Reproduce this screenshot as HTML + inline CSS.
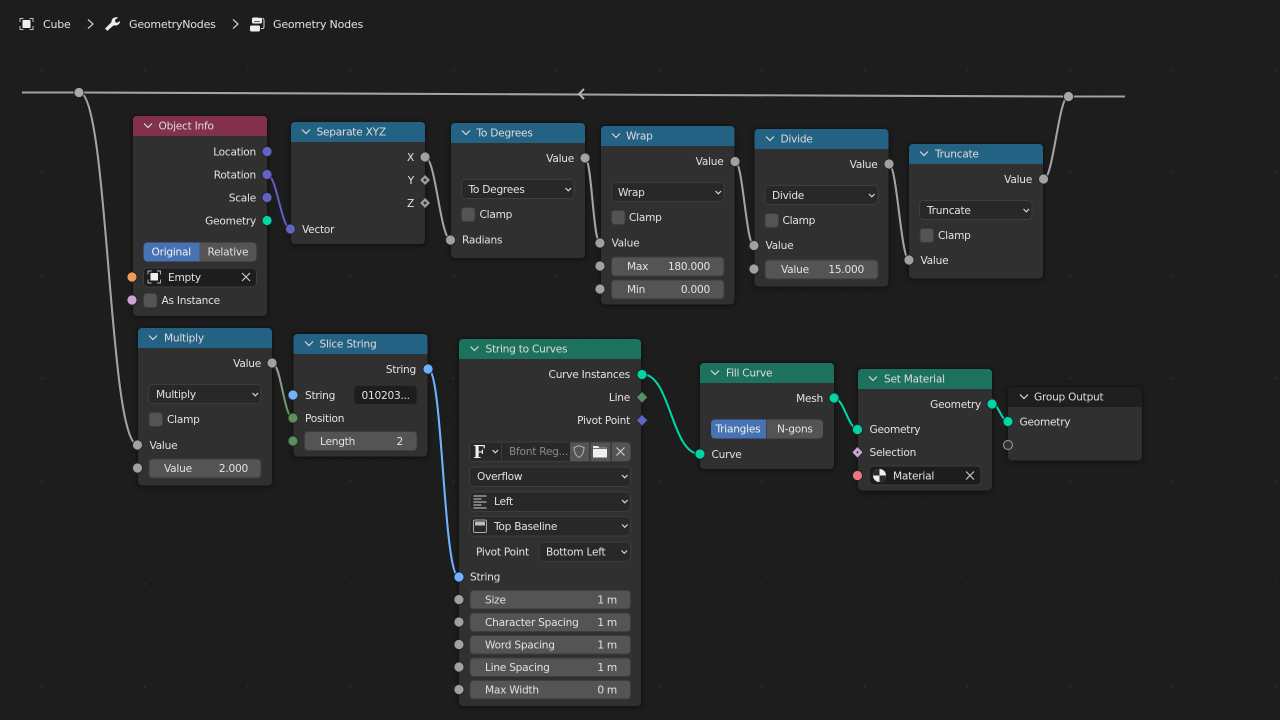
<!DOCTYPE html>
<html><head><meta charset="utf-8"><title>Geometry Nodes</title>
<style>
html,body{margin:0;padding:0;background:#1d1d1d;width:1280px;height:720px;overflow:hidden}
svg{display:block;position:absolute;left:0;top:0;filter:blur(.3px)}
text{font-family:"DejaVu Sans","Liberation Sans",sans-serif;font-size:10.6px;letter-spacing:-.25px;fill:#e2e2e2}
.b{font-size:11px;letter-spacing:-.2px}
.r{text-anchor:end}
.h{fill:#dcdcdc}
.d{fill:#8a8a8a}
.n{fill:#303030;filter:drop-shadow(0 0 1px #111) drop-shadow(0 1px 3px rgba(0,0,0,.45))}
.f{fill:#545454;stroke:#3d3d3d}
.s{fill:#282828;stroke:#3d3d3d}
.c{fill:#545454;stroke:#3d3d3d}
.ch{fill:none;stroke:#d8d8d8;stroke-width:1.2}
.o{fill:none;stroke:#1a1a1a;stroke-width:3.4}
.w{fill:none;stroke-width:2.1}
.g{stroke:#a3a3a3}
.k{fill:#a1a1a1;stroke:#222;stroke-width:.8}
.x{fill:none;stroke:#cfcfcf;stroke-width:1.1}
.sk circle{r:5px}
</style></head><body>
<svg width="1280" height="720" viewBox="0 0 1280 720" xmlns="http://www.w3.org/2000/svg">
<defs>
<pattern id="p1" x="1.2" y="8" width="20.56" height="20.56" patternUnits="userSpaceOnUse"><rect x="0" y="0" width="1.2" height="1.2" fill="#282828"/></pattern>
<pattern id="p2" x="41.2" y="69" width="102.8" height="102.8" patternUnits="userSpaceOnUse"><rect x="0" y="0" width="1.6" height="1.6" fill="#2e2e2e"/></pattern>
<linearGradient id="gp" gradientUnits="userSpaceOnUse" x1="272" y1="363" x2="293" y2="418"><stop offset="0" stop-color="#a1a1a1"/><stop offset="1" stop-color="#5b8f5b"/></linearGradient>
</defs>
<rect width="1280" height="720" fill="#1d1d1d"/>
<rect width="1280" height="720" fill="url(#p1)"/>
<rect width="1280" height="720" fill="url(#p2)"/>

<!-- breadcrumb -->
<path d="M20 22v-3.500h3.500M29.500 18.500h3.500v3.500M33 26v3.500h-3.500M23.500 29.500H20v-3.500" fill="none" stroke="#bdbdbd" stroke-width="1"/>
<rect x="22.500" y="20" width="8" height="8" fill="#f0f0f0" rx=".8"/>
<text class="b" x="43" y="28">Cube</text>
<path d="M88 19.500l5 4.500-5 4.500" fill="none" stroke="#cfcfcf" stroke-width="1.2"/>
<path d="M105.500 28.500l1.800 2 6.200-5.500c2.500.8 5.800-.2 6.300-3.500l-2.700 1.700-2.300-1.200.2-2.600 2.500-1.700c-3.200-.8-6 1.200-5.700 4.500z" fill="#f0f0f0" stroke="#f0f0f0" stroke-width=".6"/>
<text class="b" x="129" y="28">GeometryNodes</text>
<path d="M233 19.500l5 4.500-5 4.500" fill="none" stroke="#cfcfcf" stroke-width="1.200"/>
<rect x="252" y="17.500" width="10" height="6" rx="1.500" fill="#eee"/>
<rect x="250" y="25.500" width="10" height="6" rx="1.500" fill="#eee"/>
<path d="M258 17.500h3M254 21.500h6" stroke="#333" stroke-width=".8" fill="none"/>
<path d="M261 28.500h1.500c1.500 0 1.500-1 1.500-2v-6c0-1-.5-2-1.500-2" fill="none" stroke="#ddd" stroke-width="1"/>
<text class="b" x="273" y="28">Geometry Nodes</text>

<!-- reroute lines -->
<path class="o" d="M22 92.500H79L1068 96.500H1125"/>
<path class="w g" d="M22 92.500H79L1068 96.500H1125"/>
<path d="M584 89l-5 5 5 5" fill="none" stroke="#b5b5b5" stroke-width="2"/>
<path class="o" d="M79 92C109 92 108 445 138 445"/>
<path class="w g" d="M79 92C109 92 108 445 138 445"/>

<!-- Object Info -->
<rect class="n" x="133" y="116" width="134" height="200" rx="4"/>
<path d="M133 136V120a4 4 0 0 1 4-4h126a4 4 0 0 1 4 4v16z" fill="#83314a"/>
<path class="ch" d="M144 123.500l4 4 4-4"/>
<text class="h" x="158.500" y="129.500">Object Info</text>
<text class="r" x="256" y="155.500">Location</text>
<text class="r" x="256" y="178.500">Rotation</text>
<text class="r" x="256" y="201.500">Scale</text>
<text class="r" x="256" y="224.500">Geometry</text>
<path d="M147.500 242.500h52v19h-52a4 4 0 0 1-4-4v-11a4 4 0 0 1 4-4z" fill="#4772b3"/>
<path d="M199.500 242.500h53a4 4 0 0 1 4 4v11a4 4 0 0 1-4 4h-53z" fill="#545454"/>
<text x="151.500" y="255.500" style="fill:#f2f2f2">Original</text>
<text x="207.500" y="255.500">Relative</text>
<rect class="s" x="143.500" y="268" width="113" height="19" rx="4" style="fill:#1d1d1d"/>
<path d="M148 274.500v-3.500h3.500M157 271h3.500v3.500M160.500 279.500v3.500h-3.500M151.500 283H148v-3.500" fill="none" stroke="#bdbdbd" stroke-width=".9"/>
<rect x="150.500" y="273" width="7.500" height="7.500" fill="#f0f0f0"/>
<text x="168" y="281">Empty</text>
<path class="x" d="M242 273l8 8M250 273l-8 8"/>
<rect class="c" x="143.500" y="293.500" width="13.500" height="14" rx="3"/>
<text x="161.500" y="304">As Instance</text>

<!-- Separate XYZ -->
<rect class="n" x="291" y="122" width="134" height="122" rx="4"/>
<path d="M291 142V126a4 4 0 0 1 4-4h126a4 4 0 0 1 4 4v16z" fill="#246283"/>
<path class="ch" d="M302 129.500l4 4 4-4"/>
<text class="h" x="316.500" y="135.500">Separate XYZ</text>
<text class="r" x="414" y="161">X</text>
<text class="r" x="414" y="184">Y</text>
<text class="r" x="414" y="207">Z</text>
<text x="302" y="233">Vector</text>

<!-- To Degrees -->
<rect class="n" x="451" y="123" width="134" height="135" rx="4"/>
<path d="M451 143V127a4 4 0 0 1 4-4h126a4 4 0 0 1 4 4v16z" fill="#246283"/>
<path class="ch" d="M462 130.500l4 4 4-4"/>
<text class="h" x="476.500" y="136.500">To Degrees</text>
<text class="r" x="574" y="162">Value</text>
<rect class="s" x="461.500" y="179.500" width="112.500" height="19" rx="4"/>
<text x="468.500" y="193">To Degrees</text>
<path class="ch" d="M565.500 188l2.800 2.800 2.800-2.800"/>
<rect class="c" x="461.500" y="207.500" width="13.500" height="14" rx="3"/>
<text x="479.500" y="218">Clamp</text>
<text x="462" y="243.500">Radians</text>

<!-- Wrap -->
<rect class="n" x="601" y="126" width="133.500" height="178.500" rx="4"/>
<path d="M601 146V130a4 4 0 0 1 4-4h125.500a4 4 0 0 1 4 4v16z" fill="#246283"/>
<path class="ch" d="M612 133.500l4 4 4-4"/>
<text class="h" x="626" y="139.500">Wrap</text>
<text class="r" x="723.500" y="165">Value</text>
<rect class="s" x="611.500" y="182.500" width="112.500" height="19" rx="4"/>
<text x="618" y="196">Wrap</text>
<path class="ch" d="M715.500 191l2.800 2.800 2.800-2.800"/>
<rect class="c" x="611.500" y="210.500" width="13.500" height="14" rx="3"/>
<text x="629" y="221">Clamp</text>
<text x="611.500" y="246.500">Value</text>
<rect class="f" x="611.500" y="257" width="112.500" height="19" rx="3.500"/>
<text x="627" y="270">Max</text><text class="r" x="710" y="270">180.000</text>
<rect class="f" x="611.500" y="280" width="112.500" height="19" rx="3.500"/>
<text x="627" y="293">Min</text><text class="r" x="710" y="293">0.000</text>

<!-- Divide -->
<rect class="n" x="754.500" y="129" width="134" height="157.500" rx="4"/>
<path d="M754.500 149V133a4 4 0 0 1 4-4h126a4 4 0 0 1 4 4v16z" fill="#246283"/>
<path class="ch" d="M766 136.500l4 4 4-4"/>
<text class="h" x="780.500" y="142.500">Divide</text>
<text class="r" x="877.500" y="168">Value</text>
<rect class="s" x="765" y="185.500" width="113" height="19" rx="4"/>
<text x="772" y="199">Divide</text>
<path class="ch" d="M869 194l2.800 2.800 2.800-2.800"/>
<rect class="c" x="765" y="213.500" width="13.500" height="14" rx="3"/>
<text x="782.500" y="224">Clamp</text>
<text x="765.500" y="249">Value</text>
<rect class="f" x="765" y="260" width="113" height="19" rx="3.500"/>
<text x="781" y="273">Value</text><text class="r" x="864" y="273">15.000</text>

<!-- Truncate -->
<rect class="n" x="909" y="144" width="134" height="134.500" rx="4"/>
<path d="M909 164V148a4 4 0 0 1 4-4h126a4 4 0 0 1 4 4v16z" fill="#246283"/>
<path class="ch" d="M920 151.500l4 4 4-4"/>
<text class="h" x="935" y="157.500">Truncate</text>
<text class="r" x="1032" y="183">Value</text>
<rect class="s" x="919.500" y="200.500" width="112.500" height="19" rx="4"/>
<text x="927" y="214">Truncate</text>
<path class="ch" d="M1023.500 209l2.800 2.800 2.800-2.800"/>
<rect class="c" x="920" y="228.500" width="13.500" height="14" rx="3"/>
<text x="938" y="239">Clamp</text>
<text x="920.500" y="264">Value</text>

<!-- Multiply -->
<rect class="n" x="138" y="328" width="134" height="157.500" rx="4"/>
<path d="M138 348V332a4 4 0 0 1 4-4h126a4 4 0 0 1 4 4v16z" fill="#246283"/>
<path class="ch" d="M149 335.500l4 4 4-4"/>
<text class="h" x="164" y="341.500">Multiply</text>
<text class="r" x="261" y="367">Value</text>
<rect class="s" x="148.500" y="384.500" width="112.500" height="19" rx="4"/>
<text x="156" y="398">Multiply</text>
<path class="ch" d="M252.500 393l2.800 2.800 2.800-2.800"/>
<rect class="c" x="149" y="412.500" width="13.500" height="14" rx="3"/>
<text x="167" y="423">Clamp</text>
<text x="149.500" y="449">Value</text>
<rect class="f" x="149" y="459" width="112" height="19" rx="3.500"/>
<text x="164" y="472">Value</text><text class="r" x="248" y="472">2.000</text>

<!-- Slice String -->
<rect class="n" x="293.500" y="334" width="134" height="122.500" rx="4"/>
<path d="M293.500 354V338a4 4 0 0 1 4-4h126a4 4 0 0 1 4 4v16z" fill="#246283"/>
<path class="ch" d="M305 341.500l4 4 4-4"/>
<text class="h" x="319.500" y="347.500">Slice String</text>
<text class="r" x="416" y="373">String</text>
<text x="305" y="399">String</text>
<rect class="s" x="354" y="385.500" width="63" height="19" rx="4" style="fill:#1d1d1d;stroke:#2c2c2c"/>
<text x="361.500" y="399">010203...</text>
<text x="305" y="422">Position</text>
<rect class="f" x="304.500" y="431.500" width="112.500" height="19" rx="3.500"/>
<text x="320" y="445">Length</text><text class="r" x="403" y="445">2</text>

<!-- String to Curves -->
<rect class="n" x="459" y="339" width="182" height="367" rx="4"/>
<path d="M459 359V343a4 4 0 0 1 4-4h174a4 4 0 0 1 4 4v16z" fill="#1d725e"/>
<path class="ch" d="M470.500 346.500l4 4 4-4"/>
<text class="h" x="485.500" y="352.500">String to Curves</text>
<text class="r" x="630" y="378">Curve Instances</text>
<text class="r" x="630" y="401">Line</text>
<text class="r" x="630" y="424">Pivot Point</text>
<rect x="469.500" y="442" width="161" height="19.500" rx="4" fill="#282828" stroke="#3d3d3d"/>
<path d="M501.500 442.500v19" stroke="#3d3d3d"/>
<text x="473.500" y="458" style="font-family:'Liberation Serif','DejaVu Serif',serif;font-size:20px;font-weight:bold;letter-spacing:0;fill:#f0f0f0">F</text>
<path class="ch" d="M492.500 450l2.800 2.800 2.800-2.800"/>
<text class="d" x="509" y="455">Bfont Reg...</text>
<rect x="570" y="442.500" width="19.500" height="18.500" fill="#545454"/>
<path d="M574 447.500l5-1.800 5 1.800c0 5-1.500 8-5 10-3.500-2-5-5-5-10z" fill="none" stroke="#b5b5b5" stroke-width="1"/>
<rect x="590.500" y="442.500" width="20" height="18.500" fill="#545454"/>
<path d="M593 446h5l1.500 1.700h7.500v9.800h-14z" fill="#eee"/>
<path d="M593 448.500h14" stroke="#545454" stroke-width=".8"/>
<path d="M611.500 442.500h15a4 4 0 0 1 4 4v10.500a4 4 0 0 1-4 4h-15z" fill="#545454"/>
<path class="x" d="M616.500 447.500l8 8M624.500 447.500l-8 8"/>
<rect class="s" x="469.500" y="467" width="161" height="19.500" rx="4"/>
<text x="477" y="480">Overflow</text>
<path class="ch" d="M622 475l2.800 2.800 2.800-2.800"/>
<rect class="s" x="469.500" y="492" width="161" height="19.500" rx="4"/>
<path d="M473.500 496h13M473.500 499h8M473.500 502h13M473.500 505h8M473.500 508h13" stroke="#cfcfcf" stroke-width="1" fill="none"/>
<text x="494" y="505">Left</text>
<path class="ch" d="M622 500l2.800 2.800 2.800-2.800"/>
<rect class="s" x="469.500" y="516.500" width="161" height="19.500" rx="4"/>
<rect x="473.500" y="520" width="13" height="12.500" rx="1.500" fill="none" stroke="#aaa"/>
<rect x="475" y="521.500" width="10" height="4" fill="#bbb"/>
<text x="494" y="530">Top Baseline</text>
<path class="ch" d="M622 524.500l2.800 2.800 2.800-2.800"/>
<text x="476" y="555.500">Pivot Point</text>
<rect class="s" x="539" y="542" width="91.500" height="19.500" rx="4"/>
<text x="546" y="555.500">Bottom Left</text>
<path class="ch" d="M621.500 550.500l2.800 2.800 2.800-2.800"/>
<text x="470" y="580.500">String</text>
<rect class="f" x="470" y="590.500" width="160.500" height="18.500" rx="3.500"/>
<text x="485" y="603.500">Size</text><text class="r" x="617" y="603.500">1 m</text>
<rect class="f" x="470" y="613" width="160.500" height="18.500" rx="3.500"/>
<text x="485" y="626">Character Spacing</text><text class="r" x="617" y="626">1 m</text>
<rect class="f" x="470" y="635.500" width="160.500" height="18.500" rx="3.500"/>
<text x="485" y="648.500">Word Spacing</text><text class="r" x="617" y="648.500">1 m</text>
<rect class="f" x="470" y="658" width="160.500" height="18.500" rx="3.500"/>
<text x="485" y="671">Line Spacing</text><text class="r" x="617" y="671">1 m</text>
<rect class="f" x="470" y="680.500" width="160.500" height="18.500" rx="3.500"/>
<text x="485" y="693.500">Max Width</text><text class="r" x="617" y="693.500">0 m</text>

<!-- Fill Curve -->
<rect class="n" x="700" y="363" width="134" height="106" rx="4"/>
<path d="M700 383V367a4 4 0 0 1 4-4h126a4 4 0 0 1 4 4v16z" fill="#1d725e"/>
<path class="ch" d="M711 370.500l4 4 4-4"/>
<text class="h" x="726" y="376.500">Fill Curve</text>
<text class="r" x="823" y="402">Mesh</text>
<path d="M715 419.500h51v19h-51a4 4 0 0 1-4-4v-11a4 4 0 0 1 4-4z" fill="#4772b3"/>
<path d="M766.500 419.500h52.500a4 4 0 0 1 4 4v11a4 4 0 0 1-4 4h-52.500z" fill="#545454"/>
<text x="715.500" y="432.500" style="fill:#f2f2f2">Triangles</text>
<text x="777" y="432.500">N-gons</text>
<text x="711.500" y="458">Curve</text>

<!-- Set Material -->
<rect class="n" x="858" y="369" width="134" height="121.500" rx="4"/>
<path d="M858 389V373a4 4 0 0 1 4-4h126a4 4 0 0 1 4 4v16z" fill="#1d725e"/>
<path class="ch" d="M869 376.500l4 4 4-4"/>
<text class="h" x="884" y="382.500">Set Material</text>
<text class="r" x="981" y="408">Geometry</text>
<text x="869.500" y="433">Geometry</text>
<text x="869.500" y="456">Selection</text>
<rect class="s" x="869" y="466" width="112" height="19" rx="4" style="fill:#1d1d1d"/>
<circle cx="879.500" cy="475.500" r="6.500" fill="#f0f0f0"/>
<path d="M879.500 475.500V469a6.500 6.500 0 0 0-6.500 6.500zM879.500 475.500h6.500a6.500 6.500 0 0 1-6.500 6.500z" fill="#2a2a2a"/>
<text x="893" y="479.500">Material</text>
<path class="x" d="M966 471.500l8 8M974 471.500l-8 8"/>

<!-- Group Output -->
<rect class="n" x="1008" y="387" width="134" height="73.500" rx="4"/>
<path d="M1008 407V391a4 4 0 0 1 4-4h126a4 4 0 0 1 4 4v16z" fill="#1e1e1e"/>
<path class="ch" d="M1020 394.500l4 4 4-4"/>
<text class="h" x="1034" y="400.500">Group Output</text>
<text x="1019.500" y="425.500">Geometry</text>

<!-- wires -->
<path class="o" d="M267 174.500C277 174.500 281 229 291 229"/>
<path class="w" stroke="#5e5ec4" d="M267 174.500C277 174.500 281 229 291 229"/>
<path class="o" d="M425 157C436 157 440 240 451 240"/>
<path class="w g" d="M425 157C436 157 440 240 451 240"/>
<path class="o" d="M585 158C592 158 593 243 600 243"/>
<path class="w g" d="M585 158C592 158 593 243 600 243"/>
<path class="o" d="M735 161C743 161 746 245.500 754 245.500"/>
<path class="w g" d="M735 161C743 161 746 245.500 754 245.500"/>
<path class="o" d="M889 164C897 164 901 260 909 260"/>
<path class="w g" d="M889 164C897 164 901 260 909 260"/>
<path class="o" d="M1044 179C1053 179 1059 96.500 1068 96.500"/>
<path class="w g" d="M1044 179C1053 179 1059 96.500 1068 96.500"/>
<path class="o" d="M272 363C281 363 284 418 293 418"/>
<path class="w" stroke="url(#gp)" d="M272 363C281 363 284 418 293 418"/>
<path class="o" d="M428 369C443 369 443 577 459 577"/>
<path class="w" stroke="#70b2ff" d="M428 369C443 369 443 577 459 577"/>
<path class="o" d="M642 374C671 374 671 454 700 454"/>
<path class="w" stroke="#00d6a3" d="M642 374C671 374 671 454 700 454"/>
<path class="o" d="M834 398C844 398 848 429 858 429"/>
<path class="w" stroke="#00d6a3" d="M834 398C844 398 848 429 858 429"/>
<path class="o" d="M992 404C999 404 1001 421 1008 421"/>
<path class="w" stroke="#00d6a3" d="M992 404C999 404 1001 421 1008 421"/>

<!-- sockets -->
<g class="sk" stroke="#222" stroke-width=".8">
<circle cx="79" cy="92.500" r="5" fill="#a8a8a8"/>
<circle cx="1068.500" cy="96.500" r="5" fill="#a8a8a8"/>
<circle cx="267" cy="151.500" r="5" fill="#6363c7"/>
<circle cx="267" cy="174.500" r="5" fill="#6363c7"/>
<circle cx="267" cy="197.500" r="5" fill="#6363c7"/>
<circle cx="267" cy="220.500" r="5" fill="#00d6a3"/>
<circle cx="132" cy="277" r="5" fill="#ed9e5c"/>
<circle cx="132" cy="300" r="5" fill="#cca6d6"/>
<circle cx="290.500" cy="229" r="5" fill="#6363c7"/>
<circle class="k" cx="425" cy="157" r="5"/>
<path class="k" d="M425 174.500l5.500 5.500-5.500 5.500-5.500-5.500z"/>
<path class="k" d="M425 197.500l5.500 5.500-5.500 5.500-5.500-5.500z"/>
<circle class="k" cx="450.500" cy="240" r="5"/>
<circle class="k" cx="585" cy="158" r="5"/>
<circle class="k" cx="600" cy="243" r="5"/>
<circle class="k" cx="600" cy="266" r="5"/>
<circle class="k" cx="600" cy="289" r="5"/>
<circle class="k" cx="735" cy="161.500" r="5"/>
<circle class="k" cx="754" cy="245.500" r="5"/>
<circle class="k" cx="754" cy="269" r="5"/>
<circle class="k" cx="889" cy="164" r="5"/>
<circle class="k" cx="909" cy="260" r="5"/>
<circle class="k" cx="1043.500" cy="179" r="5"/>
<circle class="k" cx="272" cy="363" r="5"/>
<circle class="k" cx="137.500" cy="445" r="5"/>
<circle class="k" cx="137.500" cy="468" r="5"/>
<circle cx="428" cy="369" r="5" fill="#70b2ff"/>
<circle cx="293" cy="395" r="5" fill="#70b2ff"/>
<circle cx="293" cy="418" r="5" fill="#5b8f5b"/>
<circle cx="293" cy="441" r="5" fill="#5b8f5b"/>
<circle cx="642" cy="374.500" r="5" fill="#00d6a3"/>
<path d="M642 391.500l5.800 5.800-5.800 5.800-5.800-5.800z" fill="#5b8f5b"/>
<path d="M642 414.500l5.800 5.800-5.800 5.800-5.800-5.800z" fill="#6363c7"/>
<circle cx="459" cy="577" r="5" fill="#70b2ff"/>
<circle class="k" cx="459" cy="599.500" r="5"/>
<circle class="k" cx="459" cy="622" r="5"/>
<circle class="k" cx="459" cy="644.500" r="5"/>
<circle class="k" cx="459" cy="667" r="5"/>
<circle class="k" cx="459" cy="689.500" r="5"/>
<circle cx="700" cy="454" r="5" fill="#00d6a3"/>
<circle cx="834" cy="398" r="5" fill="#00d6a3"/>
<circle cx="857.500" cy="429.500" r="5" fill="#00d6a3"/>
<path d="M857.500 446.500l5.700 5.800-5.700 5.800-5.700-5.800z" fill="#cca6d6"/>
<circle cx="857.500" cy="475.500" r="5" fill="#eb7582"/>
<circle cx="992" cy="404" r="5" fill="#00d6a3"/>
<circle cx="1008" cy="421.500" r="5" fill="#00d6a3"/>
</g>
<circle cx="857.500" cy="452.300" r="1" fill="#222"/>
<circle cx="425" cy="180" r="1.500" fill="#303030"/>
<circle cx="425" cy="203" r="1.500" fill="#303030"/>
<circle cx="1008" cy="445" r="4.500" fill="#303030" stroke="#8a8a8a" stroke-width="1.200"/>
</svg>
</body></html>
